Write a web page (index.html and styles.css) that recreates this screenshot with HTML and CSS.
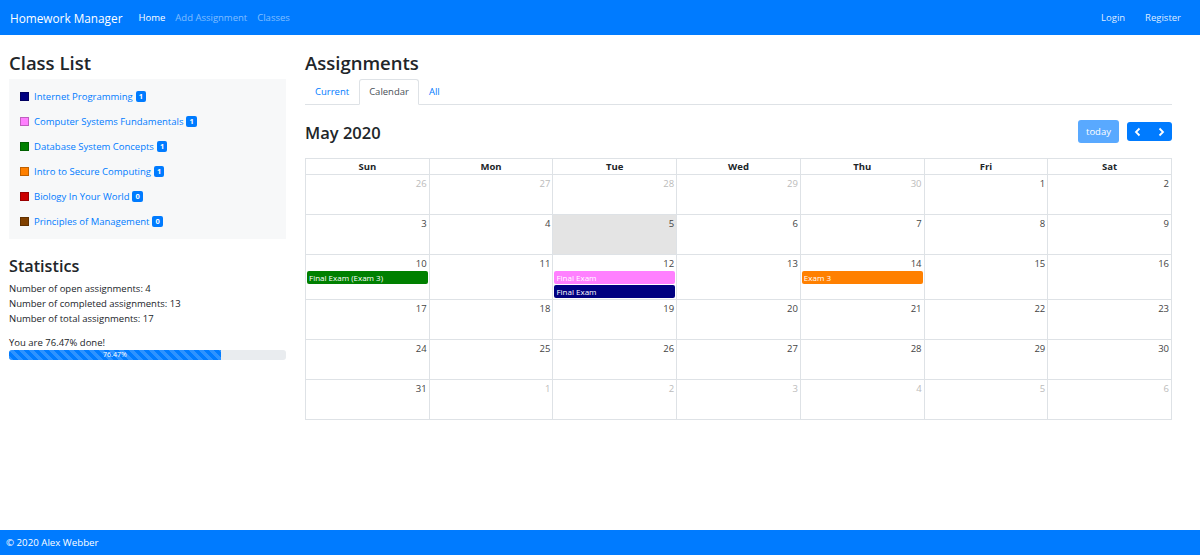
FILE: index.html
```html
<!DOCTYPE html>
<html lang="en">
<head>
<meta charset="utf-8">
<title>Homework Manager</title>
<link rel="stylesheet" href="styles.css">
</head>
<body>
<nav class="navbar">
  <a class="brand" href="#">Homework Manager</a>
  <ul class="nav-links">
    <li><a class="active" href="#">Home</a></li>
    <li><a href="#">Add Assignment</a></li>
    <li><a href="#">Classes</a></li>
  </ul>
  <ul class="nav-links nav-right">
    <li><a href="#">Login</a></li>
    <li><a href="#">Register</a></li>
  </ul>
</nav>

<main class="page">
  <aside class="side">
    <h2 class="title">Class List</h2>
    <ul class="class-list">
      <li><span class="swatch c-navy"></span><a href="#">Internet Programming</a><span class="badge">1</span></li>
      <li><span class="swatch c-pink"></span><a href="#">Computer Systems Fundamentals</a><span class="badge">1</span></li>
      <li><span class="swatch c-green"></span><a href="#">Database System Concepts</a><span class="badge">1</span></li>
      <li><span class="swatch c-orange"></span><a href="#">Intro to Secure Computing</a><span class="badge">1</span></li>
      <li><span class="swatch c-red"></span><a href="#">Biology In Your World</a><span class="badge">0</span></li>
      <li><span class="swatch c-brown"></span><a href="#">Principles of Management</a><span class="badge">0</span></li>
    </ul>

    <h3 class="stats-title">Statistics</h3>
    <div class="stats">
      <div>Number of open assignments: 4</div>
      <div>Number of completed assignments: 13</div>
      <div>Number of total assignments: 17</div>
    </div>
    <div class="done">You are 76.47% done!</div>
    <div class="progress"><div class="bar" style="width:76.47%">76.47%</div></div>
  </aside>

  <section class="content">
    <h2 class="title">Assignments</h2>
    <ul class="tabs">
      <li><a href="#">Current</a></li>
      <li><a class="active" href="#">Calendar</a></li>
      <li><a href="#">All</a></li>
    </ul>

    <div class="toolbar">
      <h2 class="month">May 2020</h2>
      <div class="tools">
        <button class="btn today-btn">today</button>
        <div class="btn-group">
          <button class="btn nav-btn" aria-label="prev"><svg width="8" height="10" viewBox="0 0 8 10"><polyline points="5.5,1.5 2,5 5.5,8.5" fill="none" stroke="#fff" stroke-width="1.8"/></svg></button>
          <button class="btn nav-btn" aria-label="next"><svg width="8" height="10" viewBox="0 0 8 10"><polyline points="2.5,1.5 6,5 2.5,8.5" fill="none" stroke="#fff" stroke-width="1.8"/></svg></button>
        </div>
      </div>
    </div>

    <div class="cal">
      <div class="head">Sun</div><div class="head">Mon</div><div class="head">Tue</div><div class="head">Wed</div><div class="head">Thu</div><div class="head">Fri</div><div class="head">Sat</div>

      <div class="day other"><div class="num">26</div></div>
      <div class="day other"><div class="num">27</div></div>
      <div class="day other"><div class="num">28</div></div>
      <div class="day other"><div class="num">29</div></div>
      <div class="day other"><div class="num">30</div></div>
      <div class="day"><div class="num">1</div></div>
      <div class="day"><div class="num">2</div></div>

      <div class="day"><div class="num">3</div></div>
      <div class="day"><div class="num">4</div></div>
      <div class="day is-today"><div class="num">5</div></div>
      <div class="day"><div class="num">6</div></div>
      <div class="day"><div class="num">7</div></div>
      <div class="day"><div class="num">8</div></div>
      <div class="day"><div class="num">9</div></div>

      <div class="day"><div class="num">10</div><div class="event c-green">Final Exam (Exam 3)</div></div>
      <div class="day"><div class="num">11</div></div>
      <div class="day"><div class="num">12</div><div class="event c-pink">Final Exam</div><div class="event c-navy">Final Exam</div></div>
      <div class="day"><div class="num">13</div></div>
      <div class="day"><div class="num">14</div><div class="event c-orange">Exam 3</div></div>
      <div class="day"><div class="num">15</div></div>
      <div class="day"><div class="num">16</div></div>

      <div class="day"><div class="num">17</div></div>
      <div class="day"><div class="num">18</div></div>
      <div class="day"><div class="num">19</div></div>
      <div class="day"><div class="num">20</div></div>
      <div class="day"><div class="num">21</div></div>
      <div class="day"><div class="num">22</div></div>
      <div class="day"><div class="num">23</div></div>

      <div class="day"><div class="num">24</div></div>
      <div class="day"><div class="num">25</div></div>
      <div class="day"><div class="num">26</div></div>
      <div class="day"><div class="num">27</div></div>
      <div class="day"><div class="num">28</div></div>
      <div class="day"><div class="num">29</div></div>
      <div class="day"><div class="num">30</div></div>

      <div class="day"><div class="num">31</div></div>
      <div class="day other"><div class="num">1</div></div>
      <div class="day other"><div class="num">2</div></div>
      <div class="day other"><div class="num">3</div></div>
      <div class="day other"><div class="num">4</div></div>
      <div class="day other"><div class="num">5</div></div>
      <div class="day other"><div class="num">6</div></div>
    </div>
  </section>
</main>

<footer class="footer">© 2020 Alex Webber</footer>
</body>
</html>
```

FILE: styles.css
```css
* { box-sizing: border-box; }

html, body {
  margin: 0;
  height: 100%;
}

body {
  display: flex;
  flex-direction: column;
  font-family: "Open Sans", "Noto Sans", sans-serif;
  font-size: 9.5px;
  color: #212529;
  background: #fff;
}

a { text-decoration: none; color: #007bff; }

/* Navbar */
.navbar {
  display: flex;
  align-items: center;
  height: 35px;
  padding: 0 9px 0 10px;
  background: #007bff;
  flex-shrink: 0;
}

.brand {
  color: #fff;
  font-size: 11.8px;
  margin-right: 11px;
}

.nav-links {
  display: flex;
  list-style: none;
  margin: 0;
  padding: 0;
}

.nav-links a {
  display: block;
  padding: 0 5px;
  color: rgba(255, 255, 255, 0.5);
}

.nav-links a.active { color: #fff; }

.nav-right { margin-left: auto; }

.nav-right a {
  padding: 0 10px;
  color: rgba(255, 255, 255, 0.88);
}

/* Page layout */
.page {
  flex: 1;
  display: grid;
  grid-template-columns: 277px 867px;
  column-gap: 19px;
  padding: 0 28px 0 9px;
  align-items: start;
}

.title {
  font-size: 18.5px;
  font-weight: 600;
  line-height: 23px;
  margin: 16px 0 5px;
}

/* Class list */
.class-list {
  list-style: none;
  margin: 0;
  padding: 5px 10px;
  background: #f7f8f9;
}

.class-list li {
  height: 25px;
  display: flex;
  align-items: center;
}

.swatch {
  width: 9px;
  height: 9px;
  margin: 0 5px 0 1px;
  border: 1px solid rgba(0, 0, 0, 0.25);
  flex-shrink: 0;
}

.badge {
  margin-left: 3px;
  background: #007bff;
  color: #fff;
  font-size: 7.5px;
  font-weight: 700;
  line-height: 9px;
  padding: 1px 3px;
  border-radius: 2px;
}

.c-navy { background: #000080; }
.c-pink { background: #ff80ff; }
.c-green { background: #008000; }
.c-orange { background: #ff8000; }
.c-red { background: #cc0000; }
.c-brown { background: #804000; }

/* Statistics */
.stats-title {
  font-size: 16.2px;
  font-weight: 600;
  line-height: 20px;
  margin: 17px 0 5px;
}

.stats { line-height: 15px; }

.done {
  margin-top: 9px;
  line-height: 15px;
}

.progress {
  display: flex;
  height: 10px;
  background: #e9ecef;
  border-radius: 3px;
  overflow: hidden;
}

.bar {
  background-color: #007bff;
  background-image: linear-gradient(45deg,
    rgba(255, 255, 255, 0.18) 25%, transparent 25%,
    transparent 50%, rgba(255, 255, 255, 0.18) 50%,
    rgba(255, 255, 255, 0.18) 75%, transparent 75%, transparent);
  background-size: 10px 10px;
  color: #fff;
  font-size: 7px;
  line-height: 10px;
  text-align: center;
}

/* Tabs */
.tabs {
  display: flex;
  list-style: none;
  margin: 5px 0 0;
  padding: 0;
  border-bottom: 1px solid #dee2e6;
}

.tabs li { margin-bottom: -1px; }

.tabs a {
  display: block;
  padding: 4px 9px 5px;
  line-height: 15px;
  border: 1px solid transparent;
  border-radius: 3px 3px 0 0;
}

.tabs a.active {
  color: #495057;
  background: #fff;
  border-color: #dee2e6 #dee2e6 #fff;
}

/* Toolbar */
.toolbar {
  display: flex;
  justify-content: space-between;
  align-items: center;
  height: 23px;
  margin: 15px 0 15px;
}

.month {
  font-size: 16.5px;
  font-weight: 600;
  line-height: 20px;
  margin: 3px 0 0;
}

.tools {
  display: flex;
  align-items: center;
  gap: 8px;
}

.btn {
  border: 0;
  font-family: inherit;
  color: #fff;
  background: #007bff;
  cursor: pointer;
  padding: 0;
}

.today-btn {
  width: 41px;
  height: 23px;
  font-size: 9.5px;
  background: #59a9ff;
  border-radius: 3px;
}

.btn-group { display: flex; }

.nav-btn {
  width: 22.5px;
  height: 19px;
  display: flex;
  align-items: center;
  justify-content: center;
}

.nav-btn:first-child { border-radius: 3px 0 0 3px; }
.nav-btn:last-child { border-radius: 0 3px 3px 0; }

/* Calendar */
.cal {
  display: grid;
  grid-template-columns: repeat(7, 1fr);
  border-top: 1px solid #dee2e6;
  border-left: 1px solid #dee2e6;
}

.head {
  text-align: center;
  font-weight: 700;
  line-height: 15px;
  border-right: 1px solid #dee2e6;
  border-bottom: 1px solid #dee2e6;
}

.day {
  min-height: 40px;
  padding-bottom: 1px;
  border-right: 1px solid #dee2e6;
  border-bottom: 1px solid #dee2e6;
}

.num {
  text-align: right;
  padding: 2px 2px 0;
  line-height: 13px;
  color: #444;
}

.other .num { color: #bbb; }

.is-today { background: #e4e4e4; }

.event {
  margin: 1px 1px 0 1px;
  height: 13px;
  line-height: 13px;
  padding-left: 2px;
  font-size: 8px;
  color: #fff;
  border-radius: 2px;
  white-space: nowrap;
  overflow: hidden;
}

/* Footer */
.footer {
  flex-shrink: 0;
  height: 25px;
  display: flex;
  align-items: center;
  padding-left: 6px;
  background: #007bff;
  color: #fff;
  font-size: 9.7px;
}
```
